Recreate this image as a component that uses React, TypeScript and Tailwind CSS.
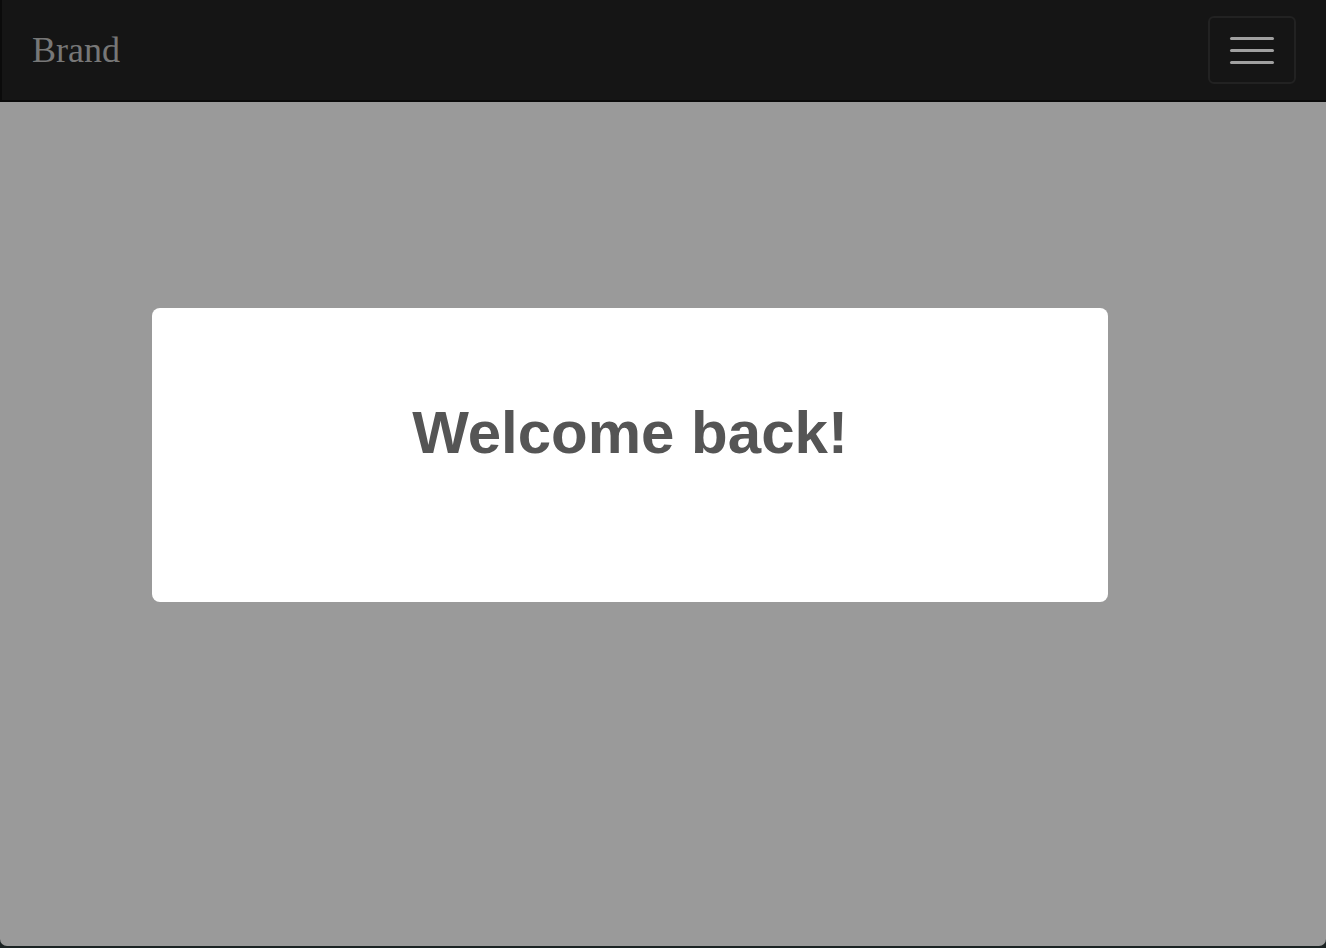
export default function App() {
  return (
    <div className="h-[948px] w-[1326px] overflow-hidden bg-[#1b2323]">
      <div className="flex h-[946px] flex-col overflow-hidden rounded-b-[7px] bg-[#9a9a9a]">
        <nav className="flex h-[102px] shrink-0 items-center justify-between border-b-2 border-l-2 border-[#0b0b0b] bg-[#151515] pl-[30px] pr-[30px]">
          <a
            href="#"
            className="text-[36px] leading-none text-[#777777] font-['Liberation_Serif',serif]"
          >
            Brand
          </a>
          <button className="flex h-[68px] w-[88px] flex-col items-center justify-center gap-[9px] rounded-[6px] border-2 border-[#222222]">
            <span className="block h-[3px] w-[44px] rounded-full bg-[#a0a0a0]" />
            <span className="block h-[3px] w-[44px] rounded-full bg-[#a0a0a0]" />
            <span className="block h-[3px] w-[44px] rounded-full bg-[#a0a0a0]" />
          </button>
        </nav>
        <main className="flex-1">
          <div className="ml-[152px] mt-[206px] h-[294px] w-[956px] rounded-[8px] bg-white pt-[95px]">
            <h1 className="text-center text-[60px] font-bold leading-none text-[#555555] font-['Liberation_Sans',Arial,sans-serif]">
              Welcome back!
            </h1>
          </div>
        </main>
      </div>
    </div>
  );
}
